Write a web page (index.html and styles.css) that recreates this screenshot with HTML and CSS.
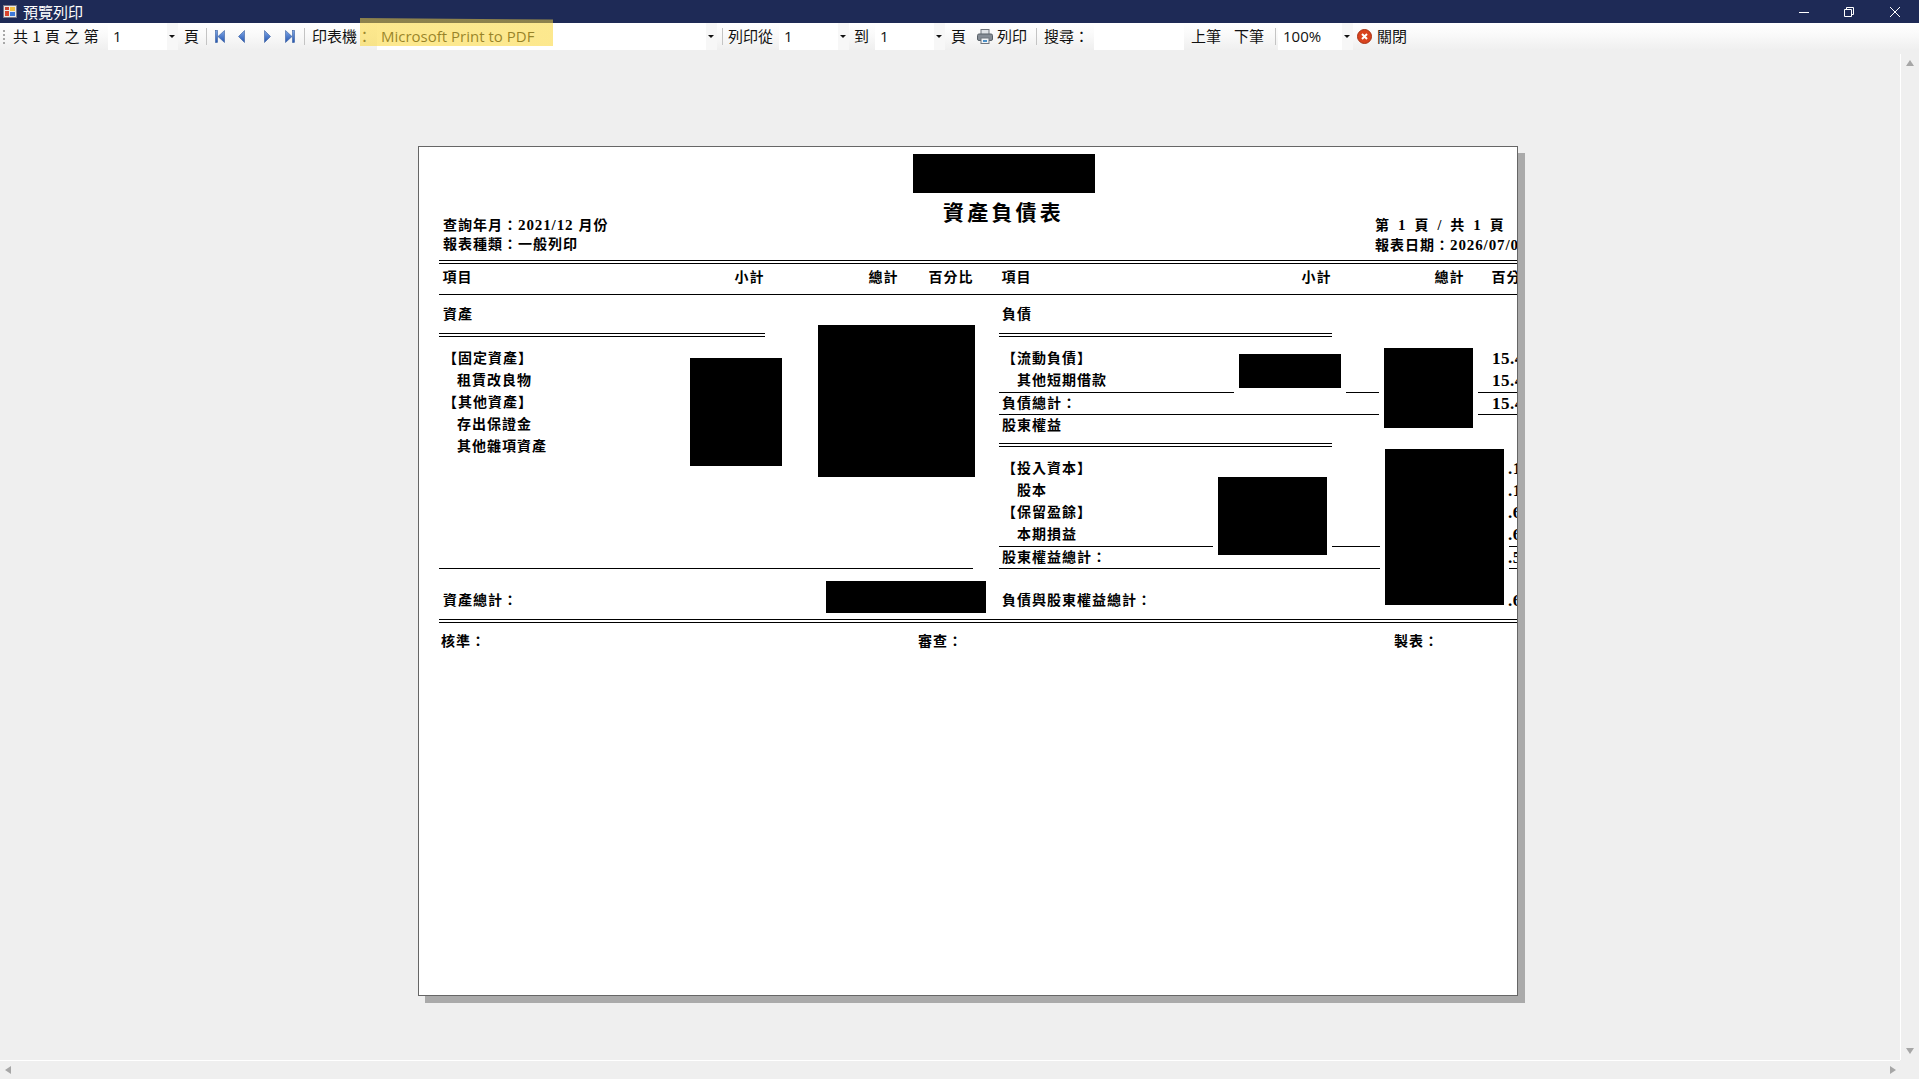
FILE: index.html
```html
<!DOCTYPE html>
<html lang="zh-Hant">
<head>
<meta charset="utf-8">
<title>預覽列印</title>
<link rel="stylesheet" href="styles.css">
</head>
<body>
<div class="app">
  <header class="titlebar">
    <svg class="appicon" width="14" height="13" viewBox="0 0 14 13"><rect x=".5" y=".5" width="13" height="12" fill="#e8e8e8" stroke="#778"/><rect x="2" y="2" width="4" height="3" fill="#c9402e"/><rect x="2" y="6" width="4" height="5" fill="#d8432c"/><rect x="7" y="2" width="5" height="4" fill="#f2c040"/><rect x="7" y="7" width="5" height="4" fill="#3d78d8"/></svg>
    <span class="wintitle">預覽列印</span>
    <div class="winbtns">
      <svg width="10" height="10" viewBox="0 0 10 10"><path d="M0 5.5H10" stroke="#fff"/></svg>
      <svg class="restore" width="10" height="10" viewBox="0 0 10 10"><path d="M.5 2.5h7v7h-7zM2.5 2.5v-2h7v7h-2" fill="none" stroke="#fff"/></svg>
      <svg class="close" width="10" height="10" viewBox="0 0 10 10"><path d="M0 0L10 10M10 0L0 10" stroke="#fff"/></svg>
    </div>
  </header>

  <nav class="toolbar">
    <span class="grip"></span>
    <span class="lbl l-page">共 1 頁 之 第</span>
    <div class="combo c-page"><span class="val">1</span><span class="drop"><i></i></span></div>
    <span class="lbl l-ye">頁</span>
    <span class="sep s-a"></span>
    <svg class="nav n1" width="10" height="13" viewBox="0 0 10 13"><defs><linearGradient id="nb" x1="0" y1="0" x2="0" y2="1"><stop offset="0" stop-color="#7fa8e8"/><stop offset="1" stop-color="#2354b0"/></linearGradient></defs><rect x=".5" y=".5" width="2" height="12" fill="url(#nb)" stroke="#3a5f9f" stroke-width=".6"/><path d="M9.5 .5V12.5L3 6.5Z" fill="url(#nb)" stroke="#3a5f9f" stroke-width=".6"/></svg>
    <svg class="nav n2" width="7" height="13" viewBox="0 0 7 13"><path d="M6.5 .5V12.5L.5 6.5Z" fill="url(#nb)" stroke="#3a5f9f" stroke-width=".6"/></svg>
    <svg class="nav n3" width="7" height="13" viewBox="0 0 7 13"><path d="M.5 .5V12.5L6.5 6.5Z" fill="url(#nb)" stroke="#3a5f9f" stroke-width=".6"/></svg>
    <svg class="nav n4" width="10" height="13" viewBox="0 0 10 13"><path d="M.5 .5V12.5L7 6.5Z" fill="url(#nb)" stroke="#3a5f9f" stroke-width=".6"/><rect x="7.5" y=".5" width="2" height="12" fill="url(#nb)" stroke="#3a5f9f" stroke-width=".6"/></svg>
    <span class="sep s-b"></span>
    <span class="lbl l-printer">印表機：</span>
    <div class="combo c-printer"><span class="val">Microsoft Print to PDF</span><span class="drop"><i></i></span></div>
    <span class="sep s-c"></span>
    <span class="lbl l-from">列印從</span>
    <div class="combo c-from"><span class="val">1</span><span class="drop"><i></i></span></div>
    <span class="lbl l-to">到</span>
    <div class="combo c-to"><span class="val">1</span><span class="drop"><i></i></span></div>
    <span class="lbl l-ye2">頁</span>
    <svg class="printer" width="16" height="15" viewBox="0 0 16 15"><rect x="4" y=".5" width="8" height="5" fill="#dfe2e6" stroke="#6f757d"/><rect x=".5" y="5" width="15" height="6.5" rx="1.5" fill="#858c95" stroke="#596068"/><rect x="4" y="9" width="8" height="5.5" fill="#f2f4f6" stroke="#6f757d"/><rect x="6" y="11" width="4" height="2" fill="#4a90c8"/></svg>
    <span class="lbl l-print">列印</span>
    <span class="sep s-d"></span>
    <span class="lbl l-search">搜尋：</span>
    <div class="searchbox"></div>
    <span class="lbl l-prev">上筆</span>
    <span class="lbl l-next">下筆</span>
    <span class="sep s-e"></span>
    <div class="combo c-zoom"><span class="val">100%</span><span class="drop"><i></i></span></div>
    <svg class="closeicon" width="15" height="15" viewBox="0 0 15 15"><circle cx="7.5" cy="7.5" r="7" fill="#d9431e" stroke="#a83214"/><path d="M5 5L10 10M10 5L5 10" stroke="#fff" stroke-width="2"/></svg>
    <span class="lbl l-close">關閉</span>
    <div class="marker"></div>
  </nav>

  <main class="work">
    <div class="mid">
      <div class="canvas">
        <article class="paper">
          <div class="report-head">
            <div class="meta">
              <p class="txt">查詢年月：<span class="num gap">2021/12</span>月份</p>
              <p class="txt">報表種類：一般列印</p>
            </div>
            <h1 class="report-title">資產負債表</h1>
            <div class="meta">
              <p class="txt spaced">第 <span class="num">1</span> 頁 / 共 <span class="num">1</span> 頁</p>
              <p class="txt">報表日期：<span class="num">2026/07/0</span></p>
            </div>
          </div>
          <div class="dbl"></div>
          <div class="colhead txt">
            <span>項目</span><span>小計</span><span>總計</span><span>百分比</span><span>項目</span><span>小計</span><span>總計</span><span>百分</span>
          </div>
          <div class="body">
            <section class="col left">
              <div class="row head txt">資產</div>
              <div class="dbl short"></div>
              <div class="rows">
                <div class="row txt">【固定資產】</div>
                <div class="row indent txt">租賃改良物</div>
                <div class="row txt">【其他資產】</div>
                <div class="row indent txt">存出保證金</div>
                <div class="row indent txt">其他雜項資產</div>
              </div>
            </section>
            <section class="col right">
              <div class="row head txt">負債</div>
              <div class="dbl wide"></div>
              <div class="rows">
                <div class="row txt"><span>【流動負債】</span><span class="pct">15.4</span></div>
                <div class="row indent txt"><span>其他短期借款</span><span class="pct">15.4</span></div>
                <div class="row ruled txt"><span>負債總計：</span><span class="pct">15.4</span></div>
                <div class="row ruled txt"><span>股東權益</span></div>
              </div>
              <div class="dbl wide"></div>
              <div class="rows">
                <div class="row txt"><span>【投入資本】</span><span class="pct tail">.1</span></div>
                <div class="row indent txt"><span>股本</span><span class="pct tail">.1</span></div>
                <div class="row txt"><span>【保留盈餘】</span><span class="pct tail">.6</span></div>
                <div class="row indent txt"><span>本期損益</span><span class="pct tail">.6</span></div>
                <div class="row ruled txt"><span>股東權益總計：</span><span class="pct tail">.5</span></div>
              </div>
            </section>
          </div>
          <div class="totals">
            <div class="total left txt">資產總計：</div>
            <div class="total right txt"><span>負債與股東權益總計：</span><span class="pct tail">.6</span></div>
          </div>
          <div class="dbl"></div>
          <div class="signs txt"><span>核準：</span><span>審查：</span><span>製表：</span></div>

          <div class="redact r1"></div>
          <div class="redact r2"></div>
          <div class="redact r3"></div>
          <div class="redact r4"></div>
          <div class="redact r5"></div>
          <div class="redact r6"></div>
          <div class="redact r7"></div>
          <div class="redact r8"></div>
        </article>
      </div>
      <aside class="vscroll">
        <svg width="8" height="6" viewBox="0 0 8 6"><path d="M4 0L8 6H0Z" fill="#a6a6a6"/></svg>
        <svg width="8" height="6" viewBox="0 0 8 6"><path d="M0 0H8L4 6Z" fill="#a6a6a6"/></svg>
      </aside>
    </div>
    <div class="hscroll">
      <svg width="6" height="8" viewBox="0 0 6 8"><path d="M6 0V8L0 4Z" fill="#a6a6a6"/></svg>
      <svg width="6" height="8" viewBox="0 0 6 8"><path d="M0 0V8L6 4Z" fill="#a6a6a6"/></svg>
    </div>
  </main>
</div>
</body>
</html>
```
FILE: styles.css
```css
* { box-sizing: border-box; }
html, body { margin: 0; height: 100%; overflow: hidden; }
body { font-family: "Noto Sans CJK TC", "Noto Sans", sans-serif; background: #efefef; color: #111; }
p, h1 { margin: 0; }

.app { display: flex; flex-direction: column; height: 100vh; }

/* title bar */
.titlebar { flex: none; height: 23px; background: #1e2a56; color: #fff; display: flex; align-items: center; padding-left: 3px; font-size: 14.5px; line-height: 23px; }
.appicon { flex: none; }
.wintitle { margin-left: 6px; white-space: nowrap; font-size: 15px; }
.winbtns { margin-left: auto; display: flex; align-items: center; padding-right: 19px; }
.winbtns .restore { margin-left: 35px; }
.winbtns .close { margin-left: 36px; }

/* tool strip */
.toolbar { flex: none; height: 27px; position: relative; display: flex; align-items: center; background: linear-gradient(#ffffff, #fbfbfb 35%, #efefef); font-size: 15px; line-height: 27px; }
.lbl { flex: none; white-space: nowrap; align-self: flex-start; line-height: 25px; }
.grip { flex: none; margin-left: 3px; width: 3px; height: 14px; border-left: 2px dotted #a8a8a8; }
.sep { flex: none; width: 1px; height: 17px; background: #c4c4c4; }
.combo { flex: none; height: 27px; display: flex; background: #fff; }
.val { flex: 1; padding-left: 5px; font-family: "Open Sans", sans-serif; font-size: 15px; white-space: nowrap; color: #111; }
.c-printer .val { padding-left: 4px; color: #000; }
.drop { flex: none; width: 11px; padding-right: 2px; background: #f7f7f7; display: flex; align-items: center; justify-content: center; }
.drop i { display: block; width: 0; height: 0; border: 3px solid transparent; border-top: 3px solid #111; border-bottom: 0; }
.nav, .printer, .closeicon { flex: none; }

.l-page { margin-left: 7px; width: 85px; word-spacing: 1px; }
.c-page { margin-left: 10px; width: 70px; }
.l-ye { margin-left: 6px; width: 15px; }
.s-a { margin-left: 7px; }
.n1 { margin-left: 8px; }
.n2 { margin-left: 13px; }
.n3 { margin-left: 19px; }
.n4 { margin-left: 14px; }
.s-b { margin-left: 9px; }
.l-printer { margin-left: 7px; width: 58px; }
.c-printer { margin-left: 7px; width: 340px; }
.s-c { margin-left: 5px; }
.l-from { margin-left: 5px; width: 45px; }
.c-from { margin-left: 6px; width: 70px; }
.l-to { margin-left: 5px; width: 15px; }
.c-to { margin-left: 6px; width: 70px; }
.l-ye2 { margin-left: 6px; width: 15px; }
.printer { margin-left: 11px; }
.l-print { margin-left: 4px; width: 30px; }
.s-d { margin-left: 9px; }
.l-search { margin-left: 7px; width: 45px; }
.searchbox { flex: none; margin-left: 5px; width: 90px; height: 27px; background: #fff; }
.l-prev { margin-left: 7px; width: 30px; }
.l-next { margin-left: 13px; width: 30px; }
.s-e { margin-left: 11px; }
.c-zoom { margin-left: 2px; width: 75px; }
.closeicon { margin-left: 4px; }
.l-close { margin-left: 5px; width: 30px; }

/* translucent highlighter stroke laid over the printer name */
.marker { position: absolute; left: 360px; top: -5px; width: 193px; height: 28px; background: linear-gradient(rgba(251, 217, 67, .5) 5px, rgba(251, 217, 67, .6) 5px); clip-path: polygon(0 0, 100% 1.5px, 100% 100%, 0 100%); }

/* work area */
.work { flex: 1; min-height: 0; display: flex; flex-direction: column; }
.mid { flex: 1; min-height: 0; display: flex; }
.canvas { flex: 1; min-width: 0; padding: 96px 0 0 418px; }
.vscroll { flex: none; width: 19px; margin-top: 4px; border-left: 1px solid #fff; padding: 6px 0 6px 5px; display: flex; flex-direction: column; justify-content: space-between; }
.hscroll { flex: none; height: 19px; width: 1900px; border-top: 1px solid #fff; padding: 0 4px 0 5px; display: flex; align-items: center; justify-content: space-between; }

/* printed page */
.paper { position: relative; width: 1100px; height: 850px; background: #fff; border: 1px solid #666; box-shadow: 7px 7px 0 #aaa; overflow: hidden; padding-left: 20px; color: #000; }
.txt { font-family: "Liberation Serif", "Noto Sans CJK TC", serif; font-weight: 700; font-size: 14px; letter-spacing: 1px; white-space: nowrap; }
.num { font-size: 15px; letter-spacing: .9px; }
.gap { margin-right: 5px; }
.spaced { word-spacing: 3.5px; }

.report-head { height: 113px; display: grid; grid-template-columns: 500px 432px 1fr; padding-left: 4px; }
.meta { padding-top: 68px; }
.meta p { line-height: 20px; height: 20px; }
.report-title { font-family: "Noto Sans CJK TC", serif; font-weight: 700; font-size: 21px; letter-spacing: 3.2px; line-height: 30px; padding-top: 49px; white-space: nowrap; }

.dbl { height: 4px; border-top: 1px solid #000; border-bottom: 1px solid #000; }
.dbl.short { width: 326px; margin-top: 7px; margin-bottom: 11px; }
.dbl.wide { width: 333px; margin-top: 7px; margin-bottom: 11px; }

.colhead { height: 31px; border-bottom: 1px solid #000; display: grid; grid-template-columns: 292px 134px 60px 73px 300px 133px 57px 40px; padding-left: 3.5px; line-height: 28px; }

.body { height: 273px; display: flex; gap: 26px; }
.col.left { flex: none; width: 534px; }
.col.right { flex: none; width: 540px; }
.row { height: 22px; line-height: 22px; padding-left: 3px; display: grid; grid-template-columns: 490px 1fr; }
.left .row { padding-left: 4px; }
.row.head { margin-top: 9px; }
.row.indent { padding-left: 18px; grid-template-columns: 475px 1fr; }
.row.ruled { border-top: 1px solid #000; line-height: 21px; }
.pct { position: relative; z-index: 1; font-size: 17px; letter-spacing: .5px; }
.pct.tail { padding-left: 16px; }

.totals { height: 51px; display: flex; gap: 26px; }
.total { border-top: 1px solid #000; padding: 21px 0 0 4px; line-height: 22px; }
.total.left { flex: none; width: 534px; }
.total.right { flex: none; width: 540px; padding-left: 3px; display: grid; grid-template-columns: 490px 1fr; }

.signs { margin-top: 8px; padding-left: 2px; display: grid; grid-template-columns: 477px 476px 1fr; line-height: 22px; }

/* blacked-out figures, each with a white halo that cuts the rules beneath it */
.redact { position: absolute; background: #000; outline: 5px solid #fff; }
.r1 { left: 494px; top: 7px; width: 182px; height: 39px; }
.r2 { left: 271px; top: 211px; width: 92px; height: 108px; }
.r3 { left: 399px; top: 178px; width: 157px; height: 152px; }
.r4 { left: 407px; top: 434px; width: 160px; height: 32px; }
.r5 { left: 820px; top: 207px; width: 102px; height: 34px; }
.r6 { left: 965px; top: 201px; width: 89px; height: 80px; }
.r7 { left: 799px; top: 330px; width: 109px; height: 78px; }
.r8 { left: 966px; top: 302px; width: 119px; height: 156px; }
```
